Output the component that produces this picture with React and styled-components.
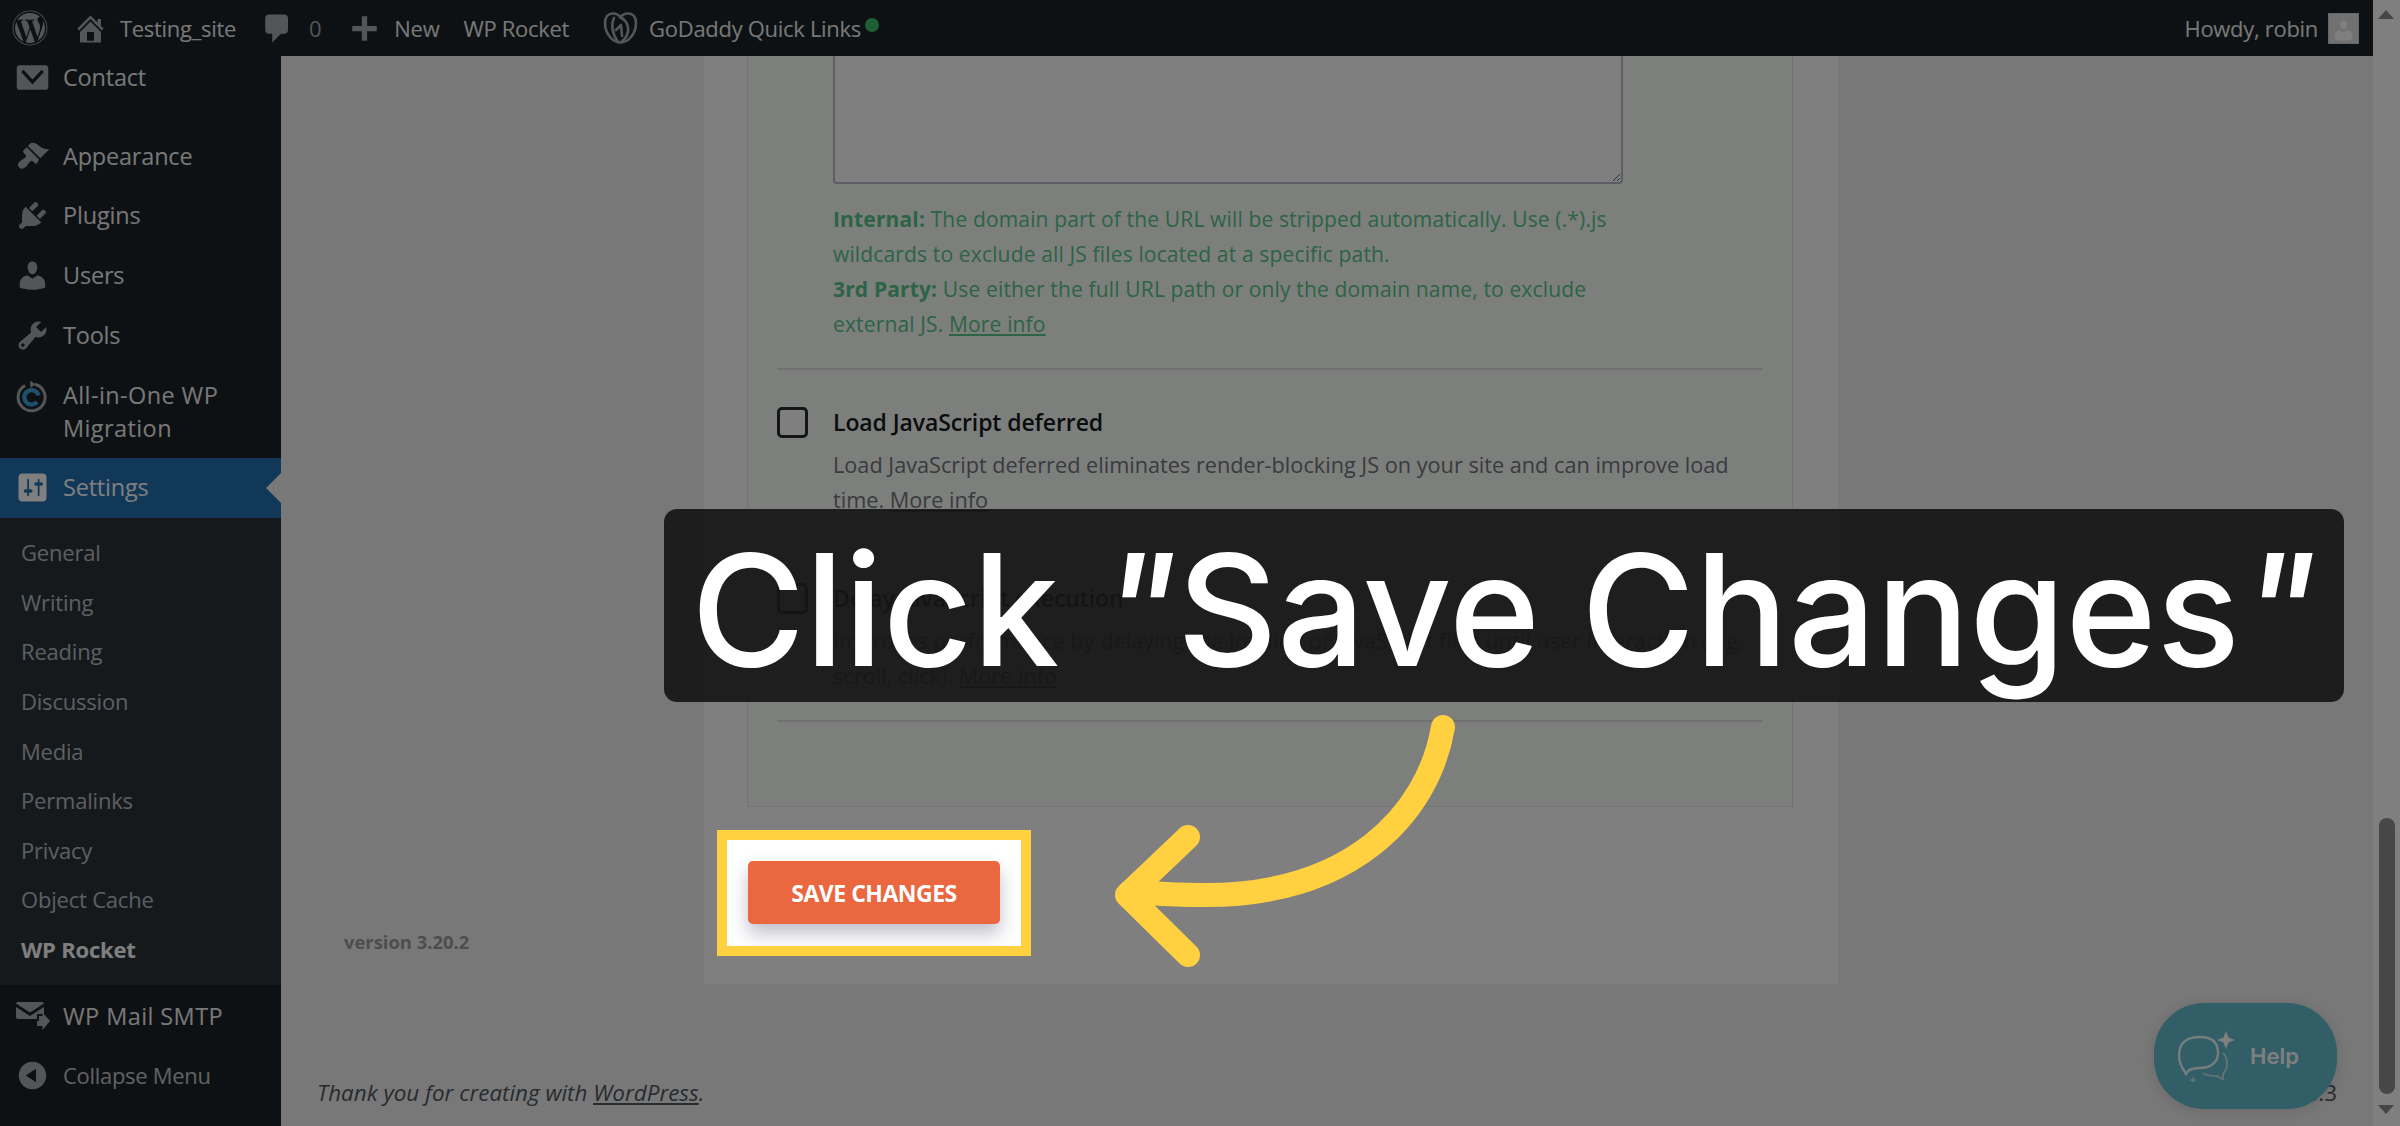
import React from "react";
import styled, { createGlobalStyle } from "styled-components";
import { FaWordpress } from "react-icons/fa";

const GlobalStyle = createGlobalStyle`
  html, body {
    margin: 0;
    padding: 0;
    overflow: hidden;
  }
  * {
    box-sizing: border-box;
  }
`;

const Page = styled.div`
  position: relative;
  display: flex;
  width: 2400px;
  height: 1126px;
  overflow: hidden;
  background: #f0f0f1;
  font-family: "Open Sans", "Liberation Sans", sans-serif;
`;

const Frame = styled.div`
  flex: 1;
  display: flex;
  flex-direction: column;
  min-width: 0;
`;

const TopBar = styled.header`
  display: flex;
  align-items: center;
  flex: 0 0 56px;
  height: 56px;
  padding: 0 14px 0 12px;
  background: #1d2327;
  color: #f0f0f1;
  font-size: 22px;
  letter-spacing: -0.3px;
`;

const BarItem = styled.div`
  position: relative;
  display: flex;
  align-items: center;
  gap: ${(props) => props.$gap || 0}px;
  margin-left: ${(props) => props.$left || 0}px;
  white-space: nowrap;
  color: ${(props) => props.$color || "inherit"};
`;

const BarSpacer = styled.div`
  flex: 1;
`;

const StatusDot = styled.span`
  position: absolute;
  right: -18px;
  top: 7px;
  width: 14px;
  height: 14px;
  border-radius: 50%;
  background: #3fbf68;
`;

const Avatar = styled.div`
  display: flex;
  align-items: flex-end;
  justify-content: center;
  width: 31px;
  height: 31px;
  margin-left: 10px;
  background: #e3e3e3;
  border: 1px solid #ccc;
  overflow: hidden;
`;

const Body = styled.div`
  flex: 1;
  display: flex;
  min-height: 0;
`;

const Sidebar = styled.nav`
  flex: 0 0 281px;
  display: flex;
  flex-direction: column;
  background: #1d2327;
  color: #f0f0f1;
  font-size: 23.5px;
  letter-spacing: -0.2px;
`;

const MenuRow = styled.div`
  position: relative;
  display: flex;
  align-items: ${(props) => (props.$tall ? "flex-start" : "center")};
  gap: 13px;
  flex: 0 0 auto;
  min-height: 59.6px;
  padding: ${(props) => (props.$tall ? "14px" : "0")} 0 ${(props) => (props.$tall ? "13px" : "0")} 15px;
  margin-top: ${(props) => props.$top || 0}px;
  line-height: 33px;
  background: ${(props) => (props.$active ? "#2271b1" : "transparent")};
  color: ${(props) => (props.$active ? "#fff" : props.$muted ? "#c3c4c7" : "inherit")};
  font-size: ${(props) => (props.$muted ? "22px" : "inherit")};
  letter-spacing: ${(props) => (props.$wide ? "0.4px" : props.$muted ? "-0.3px" : "inherit")};
  white-space: nowrap;

  ${(props) =>
    props.$active &&
    `
    &::after {
      content: "";
      position: absolute;
      right: 0;
      top: 15px;
      border: 15px solid transparent;
      border-left-width: 0;
      border-right-color: #f0f0f1;
    }
  `}
`;

const MenuIcon = styled.svg`
  flex: 0 0 35px;
  width: 35px;
  height: 35px;
  fill: ${(props) => (props.$active ? "#fff" : "#a7aaad")};
`;

const SubMenu = styled.div`
  flex: 0 0 467px;
  display: flex;
  flex-direction: column;
  padding: 10px 0 11px;
  background: #2c3338;
`;

const SubItem = styled.div`
  flex: 1;
  display: flex;
  align-items: center;
  padding-left: 21px;
  font-size: 22px;
  letter-spacing: -0.2px;
  font-weight: ${(props) => (props.$current ? 700 : 400)};
  color: ${(props) => (props.$current ? "#fff" : "rgba(240, 246, 252, 0.72)")};
`;

const Main = styled.main`
  flex: 1;
  display: flex;
  flex-direction: column;
  min-width: 0;
`;

const Columns = styled.div`
  display: flex;
  flex: 0 0 928px;
`;

const PluginNav = styled.div`
  flex: 0 0 423px;
  display: flex;
  align-items: flex-end;
  padding: 0 0 30px 63px;
  color: #9b9b9b;
  font-size: 18.4px;
  font-weight: 700;
`;

const SettingsColumn = styled.section`
  flex: 0 0 1134px;
  padding: 0 45px 0 43px;
  background: #fff;
`;

const Card = styled.div`
  height: 751px;
  padding: 0 29px;
  background: #fafefa;
  border: 1px solid #e4e6e4;
  border-top: 0;
`;

const FieldBlock = styled.div`
  padding: 0 0 0 56px;
  height: 314px;
  border-bottom: 2px solid #e1e3e1;
`;

const Excludes = styled.textarea`
  display: block;
  width: 790px;
  height: 128px;
  padding: 0;
  resize: both;
  background: #fff;
  border: 2px solid #b7bcc9;
  border-top: 0;
  border-radius: 0 0 4px 4px;
`;

const HelpText = styled.p`
  margin: 18px 0 0;
  font-size: 21px;
  line-height: 35px;
  letter-spacing: 0.15px;
  white-space: nowrap;
  color: #58c88a;

  b {
    font-weight: 700;
  }
`;

const Option = styled.div`
  height: 176px;
  padding-top: 36px;
  border-bottom: 2px solid #e1e3e1;
`;

const OptionHead = styled.div`
  display: flex;
  align-items: center;
  gap: 25px;
`;

const Checkbox = styled.span`
  flex: 0 0 31px;
  height: 31px;
  border: 3px solid #262b2e;
  border-radius: 5px;
  background: #fff;
`;

const OptionTitle = styled.h3`
  margin: 0;
  font-size: 23px;
  font-weight: 600;
  letter-spacing: -0.1px;
  color: #16181a;
`;

const OptionText = styled.p`
  margin: 9px 0 0 56px;
  font-size: 21.7px;
  line-height: 35px;
  white-space: nowrap;
  color: #72777c;
`;

const MoreLink = styled.a`
  color: inherit;
  text-decoration: underline;
`;

const SaveRow = styled.div`
  padding: 54px 0 0 1px;
`;

const SaveButton = styled.button`
  width: 252px;
  height: 63px;
  border: 0;
  border-radius: 5px;
  background: #ea673f;
  color: #fff;
  font-family: inherit;
  font-size: 23px;
  font-weight: 700;
  letter-spacing: -0.5px;
  box-shadow: 0 10px 18px rgba(60, 60, 100, 0.32);
`;

const Footer = styled.footer`
  display: flex;
  align-items: center;
  justify-content: space-between;
  flex: 1;
  padding: 74px 36px 0;
  font-size: 22.4px;
  color: #50575e;
`;

const FooterNote = styled.em`
  a {
    color: inherit;
    text-decoration: underline;
  }
`;

const ScrollTrack = styled.div`
  position: relative;
  flex: 0 0 27px;
  display: flex;
  flex-direction: column;
  align-items: center;
  background: #fff;
`;

const ScrollArrow = styled.span`
  position: absolute;
  left: 5px;
  ${(props) => (props.$down ? "bottom: 12px;" : "top: 10px;")}
  border-left: 8.5px solid transparent;
  border-right: 8.5px solid transparent;
  ${(props) =>
    props.$down ? "border-top: 9px solid #8a8a8a;" : "border-bottom: 9px solid #8a8a8a;"}
`;

const ScrollThumb = styled.span`
  position: absolute;
  left: 6px;
  top: 818px;
  width: 16px;
  height: 276px;
  border-radius: 8px;
  background: #8f8f8f;
`;

const HelpBubble = styled.div`
  position: absolute;
  left: 2154px;
  top: 1003px;
  display: flex;
  align-items: center;
  gap: 13px;
  width: 183px;
  height: 106px;
  padding: 0 0 0 23px;
  border-radius: 50px;
  background: #62bdcf;
  color: #fff;
  font-family: "Inter", sans-serif;
  font-size: 22px;
  font-weight: 600;
  box-shadow: 0 2px 14px rgba(0, 0, 0, 0.12);
`;

const Spotlight = styled.div`
  position: absolute;
  left: 717px;
  top: 830px;
  width: 314px;
  height: 126px;
  border: solid #ffd140;
  border-width: 10px;
  box-shadow: 0 0 0 4000px rgba(0, 0, 0, 0.5);
`;

const Caption = styled.div`
  position: absolute;
  left: 664px;
  top: 509px;
  display: flex;
  align-items: center;
  justify-content: center;
  width: 1680px;
  height: 193px;
  padding: 8px 0 0;
  border-radius: 13px;
  background: rgba(22, 22, 22, 0.92);
  color: #fff;
  font-family: "Inter", sans-serif;
  font-size: 155px;
  font-weight: 500;
  white-space: nowrap;
`;

const Quote = styled.span`
  font-style: italic;
`;

const Pointer = styled.svg`
  position: absolute;
  left: 1100px;
  top: 710px;
  width: 360px;
  height: 270px;
  fill: none;
  stroke: #ffd140;
  stroke-width: 24;
  stroke-linecap: round;
  stroke-linejoin: round;
`;

const icons = {
  contact:
    "M19 4.500v11c0 .800-.700 1.500-1.500 1.500h-15C1.700 17 1 16.300 1 15.500v-11C1 3.700 1.700 3 2.500 3h15c.800 0 1.500.700 1.500 1.500zM10 11.200 4.800 5.500 3.500 6.800 10 14l6.500-7.200-1.300-1.300z",
  appearance:
    "M14.480 11.060L7.410 3.990l1.500-1.500c.500-.560 2.300-.470 3.510.320 1.210.800 1.430 1.280 2.910 2.100 1.180.640 2.450 1.260 4.450.850zm-.710.710L6.700 4.700 4.930 6.470c-.390.390-.390 1.020 0 1.410l1.060 1.060c.390.390.390 1.030 0 1.420-.600.600-1.430 1.110-2.210 1.690-.350.260-.700.530-1.010.840C1.430 13.710 1.400 15.290 2.380 16.270c.980.980 2.550.950 3.890-.390.310-.310.580-.660.840-1.010.580-.780 1.090-1.610 1.690-2.210.390-.390 1.030-.390 1.420 0l1.060 1.060c.390.390 1.020.390 1.410 0z",
  plugins:
    "M13.110 4.360L9.870 7.600 8 5.730l3.240-3.240c.350-.340 1.050-.200 1.560.320.520.510.660 1.210.310 1.550zm-8 1.770l.910-1.120 9.010 9.010-1.190.840c-.710.710-2.630 1.160-3.820 1.160H6.140L4.900 17.260c-.590.590-1.540.590-2.120 0-.590-.580-.590-1.530 0-2.120l1.240-1.240v-3.880c0-1.130.400-3.190 1.090-3.890zm7.260 3.970l3.240-3.240c.340-.350 1.040-.210 1.550.310.520.510.660 1.210.31 1.550l-3.240 3.250z",
  users:
    "M10 9.250c-2.270 0-2.730-3.440-2.730-3.440C7 4.020 7.820 2 9.970 2c2.160 0 2.980 2.020 2.710 3.810 0 0-.410 3.440-2.680 3.440zm0 2.570L12.720 10c2.390 0 4.520 2.330 4.520 4.530v2.490s-3.650 1.130-7.240 1.130c-3.650 0-7.240-1.130-7.240-1.130v-2.490c0-2.250 1.940-4.480 4.470-4.480z",
  tools:
    "M16.680 9.770c-1.340 1.340-3.300 1.670-4.950.990l-5.410 6.520c-.990.990-2.590.990-3.580 0s-.990-2.590 0-3.570l6.520-5.420c-.680-1.650-.350-3.610.990-4.950 1.280-1.280 3.120-1.620 4.720-1.060l-2.890 2.890 2.820 2.820 2.860-2.870c.530 1.580.180 3.390-1.080 4.650zM3.810 16.210c.400.390 1.040.390 1.430 0 .400-.400.400-1.040 0-1.430-.390-.400-1.030-.400-1.430 0-.390.390-.390 1.030 0 1.430z",
  settings:
    "M18 16V4c0-1.100-.900-2-2-2H4c-1.100 0-2 .900-2 2v12c0 1.100.900 2 2 2h12c1.100 0 2-.900 2-2zM8 11h1c.550 0 1 .450 1 1s-.450 1-1 1H8v1.500c0 .280-.220.500-.500.500s-.500-.220-.500-.500V13H6c-.550 0-1-.450-1-1s.450-1 1-1h1V5.500c0-.280.220-.500.500-.500s.500.220.500.500V11zm5-2h-1c-.550 0-1-.450-1-1s.450-1 1-1h1V5.500c0-.280.220-.500.500-.500s.500.220.500.500V7h1c.550 0 1 .450 1 1s-.450 1-1 1h-1v5.500c0 .280-.220.500-.500.500s-.500-.220-.500-.500V9z",
  collapse:
    "M10 2.160c4.330 0 7.840 3.510 7.840 7.840s-3.510 7.840-7.840 7.840S2.160 14.330 2.160 10 5.710 2.160 10 2.160zm2 11.720V6.120L6.180 9.970z",
  home: "M16 8.500l1.530 1.530-1.060 1.060L10 4.620l-6.470 6.470-1.060-1.060L10 2.500l4 4v-2h2v4zm-6-2.460l6 5.990V18H4v-5.970zM12 17v-5H8v5h4z",
  comment:
    "M5 2h9c1.100 0 2 .900 2 2v7c0 1.100-.900 2-2 2h-2l-5 5v-5H5c-1.100 0-2-.900-2-2V4c0-1.100.900-2 2-2z",
  plus: "M17 8.500v3h-5.500V17h-3v-5.500H3v-3h5.500V3h3v5.500z",
};

function DashIcon({ name, active }) {
  return (
    <MenuIcon viewBox="0 0 20 20" $active={active}>
      <path fillRule="evenodd" d={icons[name]} />
    </MenuIcon>
  );
}

function MigrationIcon() {
  return (
    <MenuIcon viewBox="0 0 35 35" style={{ fill: "none" }}>
      <path d="M20 5.200A13.500 13.500 0 1 1 10 6.500" stroke="#a7aaad" strokeWidth="3" />
      <path d="M15 1.500l5.500 3.700-5 3.800z" fill="#a7aaad" />
      <path d="M23.500 16.500a7.200 7.200 0 1 0-1.500 6.500" stroke="#3f9fdc" strokeWidth="4.200" />
    </MenuIcon>
  );
}

function MailIcon() {
  return (
    <MenuIcon viewBox="0 0 35 35">
      <path d="M3 3h24c1 0 1.800.700 2 1.600L15 13.500 1 4.600C1.200 3.700 2 3 3 3z" />
      <path d="M1 8l14 9 14-9v7h-7v5H3c-1 0-2-1-2-2z" />
      <path d="M24 22v-5h3.500v-3.500L35 22l-7.500 9v-4H22v-5z" />
    </MenuIcon>
  );
}

function GoDaddyLogo() {
  return (
    <svg width="35" height="34" viewBox="0 0 35 34" fill="none" stroke="#a7aaad" strokeWidth="2.600" strokeLinecap="round" strokeLinejoin="round">
      <path d="M10 2.500C5 2.500 2 6.500 2 12c0 10 7 19.500 15.500 19.500S33 22 33 12c0-5.500-3-9.500-8-9.500-3.500 0-6 1.500-7.500 4-1.500-2.500-4-4-7.500-4z" />
      <path d="M11 7c-3 6-2 16 4 24" />
      <path d="M17.500 6.500C21 8 24 11 25 16c1 6-2 12-7 15" />
      <path d="M13 19l5-5 1 11" />
    </svg>
  );
}

function HelpIcon() {
  return (
    <svg width="60" height="54" viewBox="0 0 60 54" fill="none" stroke="#fff" strokeWidth="2.400">
      <path d="M8 43c-3-4-6-9-6-16C2 14 9 8 23 8c13 0 18 6 18 16s-8 15-19 15c-4 0-7 1-10 2l-3 4z" strokeOpacity="0.9" />
      <path d="M46 24c3 3 4 6 4 10 0 6-2 9-4 11l0 5-6-3c-7 0-11-1-14-3" strokeWidth="2" strokeOpacity="0.6" />
      <path d="M49 2l2.500 6.500 6.500 2.500-6.500 2.500-2.500 6.500-2.500-6.500-6.500-2.500 6.500-2.500z" fill="#fff" stroke="none" />
      <path d="M16 47l1 3 3 1-3 1-1 2-1-2-3-1 3-1z" fill="#fff" stroke="none" opacity="0.6" />
    </svg>
  );
}

const subItems = [
  "General",
  "Writing",
  "Reading",
  "Discussion",
  "Media",
  "Permalinks",
  "Privacy",
  "Object Cache",
];

function App() {
  return (
    <Page>
      <GlobalStyle />
      <Frame>
        <TopBar>
          <BarItem $color="#a7aaad">
            <FaWordpress size={36} />
          </BarItem>
          <BarItem $left={25} $gap={12}>
            <DashIcon name="home" />
            Testing_site
          </BarItem>
          <BarItem $left={24} $gap={14} $color="#a7aaad">
            <DashIcon name="comment" />0
          </BarItem>
          <BarItem $left={26} $gap={12}>
            <DashIcon name="plus" />
            New
          </BarItem>
          <BarItem $left={24}>WP Rocket</BarItem>
          <BarItem $left={34} $gap={11}>
            <GoDaddyLogo />
            GoDaddy Quick Links
            <StatusDot />
          </BarItem>
          <BarSpacer />
          <BarItem>
            Howdy, robin
            <Avatar>
              <svg width="25" height="25" viewBox="0 0 20 20" fill="#fff">
                <path d={icons.users} />
              </svg>
            </Avatar>
          </BarItem>
        </TopBar>
        <Body>
          <Sidebar>
            <MenuRow $top={-8}>
              <DashIcon name="contact" />
              Contact
            </MenuRow>
            <MenuRow $top={19}>
              <DashIcon name="appearance" />
              Appearance
            </MenuRow>
            <MenuRow>
              <DashIcon name="plugins" />
              Plugins
            </MenuRow>
            <MenuRow>
              <DashIcon name="users" />
              Users
            </MenuRow>
            <MenuRow>
              <DashIcon name="tools" />
              Tools
            </MenuRow>
            <MenuRow $tall $wide>
              <MigrationIcon />
              <span>
                All-in-One WP
                <br />
                Migration
              </span>
            </MenuRow>
            <MenuRow $active>
              <DashIcon name="settings" active />
              Settings
            </MenuRow>
            <SubMenu>
              {subItems.map((item) => (
                <SubItem key={item}>{item}</SubItem>
              ))}
              <SubItem $current>WP Rocket</SubItem>
            </SubMenu>
            <MenuRow $top={2} $wide>
              <MailIcon />
              WP Mail SMTP
            </MenuRow>
            <MenuRow $muted>
              <DashIcon name="collapse" />
              Collapse Menu
            </MenuRow>
          </Sidebar>
          <Main>
            <Columns>
              <PluginNav>version 3.20.2</PluginNav>
              <SettingsColumn>
                <Card>
                  <FieldBlock>
                    <Excludes readOnly />
                    <HelpText>
                      <b>Internal:</b> The domain part of the URL will be stripped automatically. Use (.*).js
                      <br />
                      wildcards to exclude all JS files located at a specific path.
                      <br />
                      <b>3rd Party:</b> Use either the full URL path or only the domain name, to exclude
                      <br />
                      external JS. <MoreLink>More info</MoreLink>
                    </HelpText>
                  </FieldBlock>
                  <Option>
                    <OptionHead>
                      <Checkbox />
                      <OptionTitle>Load JavaScript deferred</OptionTitle>
                    </OptionHead>
                    <OptionText>
                      Load JavaScript deferred eliminates render-blocking JS on your site and can improve load
                      <br />
                      time. <MoreLink>More info</MoreLink>
                    </OptionText>
                  </Option>
                  <Option>
                    <OptionHead>
                      <Checkbox />
                      <OptionTitle>Delay JavaScript execution</OptionTitle>
                    </OptionHead>
                    <OptionText>
                      Improves performance by delaying the loading of JavaScript files until user interaction (e.g.
                      <br />
                      scroll, click). <MoreLink>More info</MoreLink>
                    </OptionText>
                  </Option>
                </Card>
                <SaveRow>
                  <SaveButton>SAVE CHANGES</SaveButton>
                </SaveRow>
              </SettingsColumn>
            </Columns>
            <Footer>
              <FooterNote>
                Thank you for creating with <a>WordPress</a>.
              </FooterNote>
              <span>Version 6.8.3</span>
            </Footer>
          </Main>
        </Body>
      </Frame>
      <ScrollTrack>
        <ScrollArrow />
        <ScrollThumb />
        <ScrollArrow $down />
      </ScrollTrack>
      <HelpBubble>
        <HelpIcon />
        Help
      </HelpBubble>
      <Spotlight />
      <Caption>
        <span>
          Click <Quote>"</Quote>Save Changes<Quote>"</Quote>
        </span>
      </Caption>
      <Pointer viewBox="1100 710 360 270">
        <path d="M1443 727C1428 815 1350 897 1200 895C1170 895 1150 893 1130 892" />
        <path d="M1188 837L1127 895L1188 955" />
      </Pointer>
    </Page>
  );
}

export default App;
